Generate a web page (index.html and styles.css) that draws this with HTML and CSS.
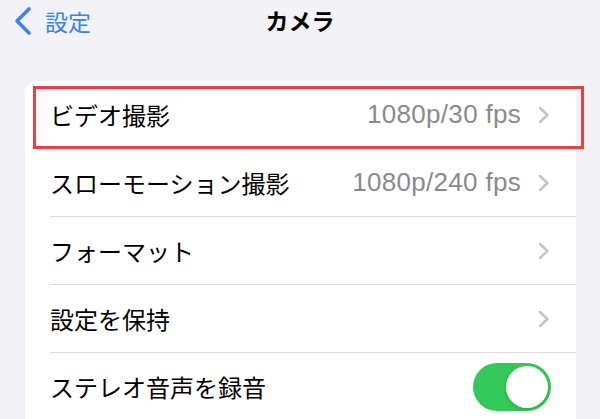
FILE: index.html
```html
<!DOCTYPE html>
<html lang="ja">
<head>
<meta charset="utf-8">
<link rel="stylesheet" href="styles.css">
</head>
<body>
<header class="nav">
  <a class="back">
    <svg class="back-icon" width="20" height="30" viewBox="0 0 20 30"><path d="M16 3 L4 15 L16 27" fill="none" stroke="#3a82f0" stroke-width="3.6" stroke-linecap="round" stroke-linejoin="round"/></svg>
    <span class="back-label">設定</span>
  </a>
  <h1 class="title">カメラ</h1>
</header>
<section class="card">
  <div class="row">
    <span class="label">ビデオ撮影</span>
    <span class="value">1080p/30 fps</span>
    <svg class="chev" width="12" height="18" viewBox="0 0 12 18"><path d="M2 2 L9.5 9 L2 16" fill="none" stroke="#c4c4c7" stroke-width="2.4" stroke-linecap="round" stroke-linejoin="round"/></svg>
    <div class="highlight"></div>
  </div>
  <div class="row">
    <span class="label">スローモーション撮影</span>
    <span class="value">1080p/240 fps</span>
    <svg class="chev" width="12" height="18" viewBox="0 0 12 18"><path d="M2 2 L9.5 9 L2 16" fill="none" stroke="#c4c4c7" stroke-width="2.4" stroke-linecap="round" stroke-linejoin="round"/></svg>
  </div>
  <div class="row">
    <span class="label">フォーマット</span>
    <svg class="chev" width="12" height="18" viewBox="0 0 12 18"><path d="M2 2 L9.5 9 L2 16" fill="none" stroke="#c4c4c7" stroke-width="2.4" stroke-linecap="round" stroke-linejoin="round"/></svg>
  </div>
  <div class="row">
    <span class="label">設定を保持</span>
    <svg class="chev" width="12" height="18" viewBox="0 0 12 18"><path d="M2 2 L9.5 9 L2 16" fill="none" stroke="#c4c4c7" stroke-width="2.4" stroke-linecap="round" stroke-linejoin="round"/></svg>
  </div>
  <div class="row last">
    <span class="label">ステレオ音声を録音</span>
    <div class="toggle"><div class="knob"></div></div>
  </div>
</section>
</body>
</html>
```
FILE: styles.css
```css
html, body {
  margin: 0;
  padding: 0;
}
body {
  background: #f2f2f7;
  font-family: "Noto Sans CJK JP", "Liberation Sans", sans-serif;
  color: #000;
  width: 600px;
  height: 419px;
  overflow: hidden;
}
.nav {
  position: relative;
  height: 41px;
  display: flex;
  align-items: center;
}
.back {
  display: flex;
  align-items: center;
  gap: 12px;
  padding-left: 13px;
  color: #3a82f0;
}
.back-icon {
  display: block;
}
.back-label {
  font-size: 23px;
  line-height: 1;
  margin-top: 1px;
}
.title {
  position: absolute;
  left: 0;
  right: 0;
  top: 0;
  margin: 0;
  height: 41px;
  line-height: 41px;
  text-align: center;
  font-size: 23px;
  font-weight: 700;
  pointer-events: none;
}
.card {
  margin: 40px 24px 0 25px;
  background: #fff;
  border-radius: 12px 12px 0 0;
  padding-left: 25px;
}
.row {
  position: relative;
  height: 68px;
  box-sizing: border-box;
  border-bottom: 1px solid #dcdce0;
  display: flex;
  align-items: center;
  padding-right: 26px;
}
.row.last {
  border-bottom: none;
  padding-right: 25px;
}
.label {
  flex: 1;
  font-size: 24px;
  line-height: 1;
}
.value {
  font-family: "Liberation Sans", sans-serif;
  font-size: 26px;
  letter-spacing: 0.3px;
  color: #8a8a8e;
  margin-right: 17px;
}
.chev {
  display: block;
}
.highlight {
  position: absolute;
  left: -17px;
  right: -8px;
  top: 5px;
  height: 63px;
  border: 3px solid #e8423c;
  box-sizing: border-box;
  pointer-events: none;
}
.toggle {
  width: 78px;
  height: 48px;
  border-radius: 24px;
  background: #34c759;
  display: flex;
  justify-content: flex-end;
  align-items: center;
  padding: 3px;
  box-sizing: border-box;
}
.knob {
  width: 42px;
  height: 42px;
  border-radius: 50%;
  background: #fff;
  box-shadow: 0 2px 4px rgba(0,0,0,0.12);
}
```
